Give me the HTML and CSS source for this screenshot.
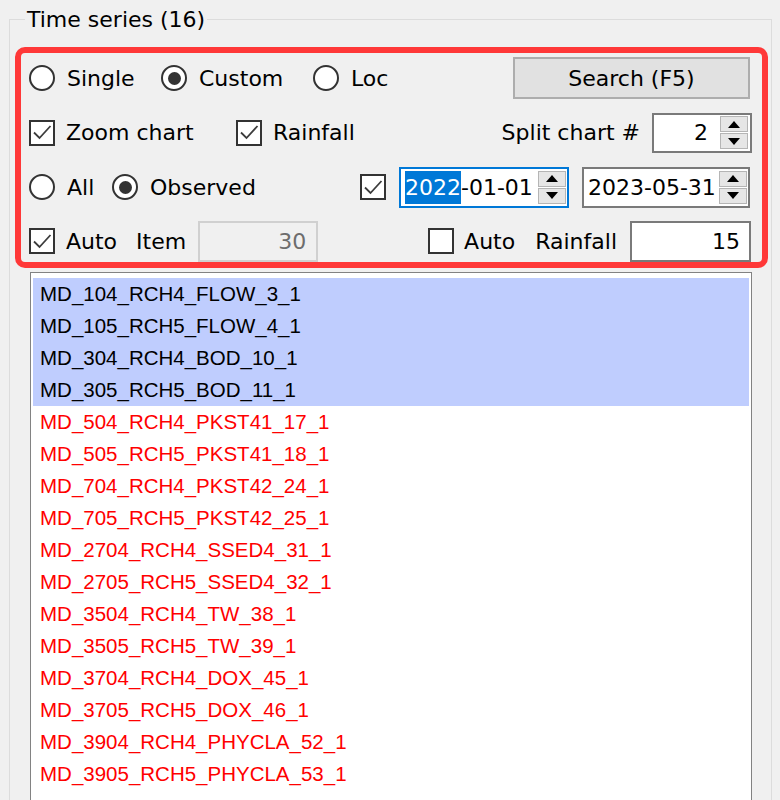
FILE: index.html
```html
<!DOCTYPE html>
<html>
<head>
<meta charset="utf-8">
<link rel="stylesheet" href="styles.css">
</head>
<body>
<div class="group">
  <div class="group-title">Time series (16)</div>
  <div class="panel">
    <div class="row row1">
      <div class="opt w-single"><span class="radio"></span>Single</div>
      <div class="opt w-custom"><span class="radio on"></span>Custom</div>
      <div class="opt"><span class="radio"></span>Loc</div>
      <div class="btn">Search (F5)</div>
    </div>
    <div class="row row2">
      <div class="opt w-zoom"><span class="chk on"><svg viewBox="0 0 25 25" width="25" height="25"><polyline points="4,12.5 9.5,18 20.5,6" fill="none" stroke="#3c3c3c" stroke-width="1.8"/></svg></span>Zoom chart</div>
      <div class="opt"><span class="chk on"><svg viewBox="0 0 25 25" width="25" height="25"><polyline points="4,12.5 9.5,18 20.5,6" fill="none" stroke="#3c3c3c" stroke-width="1.8"/></svg></span>Rainfall</div>
      <div class="split">
        <span>Split chart #</span>
        <div class="spin">
          <div class="spin-val">2</div>
          <div class="spin-btns">
            <div class="sbtn"><svg viewBox="0 0 12 7" width="12" height="7"><polygon points="6,0 12,7 0,7" fill="#000"/></svg></div>
            <div class="sbtn"><svg viewBox="0 0 12 7" width="12" height="7"><polygon points="0,0 12,0 6,7" fill="#000"/></svg></div>
          </div>
        </div>
      </div>
    </div>
    <div class="row row3">
      <div class="opt w-all"><span class="radio"></span>All</div>
      <div class="opt"><span class="radio on"></span>Observed</div>
      <div class="dates">
        <span class="chk on"><svg viewBox="0 0 25 25" width="25" height="25"><polyline points="4,12.5 9.5,18 20.5,6" fill="none" stroke="#3c3c3c" stroke-width="1.8"/></svg></span>
        <div class="date focus">
          <span class="date-val"><span class="hl">2022</span>-01-01</span>
          <div class="spin-btns">
            <div class="sbtn"><svg viewBox="0 0 12 7" width="12" height="7"><polygon points="6,0 12,7 0,7" fill="#000"/></svg></div>
            <div class="sbtn"><svg viewBox="0 0 12 7" width="12" height="7"><polygon points="0,0 12,0 6,7" fill="#000"/></svg></div>
          </div>
        </div>
        <div class="date d2">
          <span class="date-val">2023-05-31</span>
          <div class="spin-btns">
            <div class="sbtn"><svg viewBox="0 0 12 7" width="12" height="7"><polygon points="6,0 12,7 0,7" fill="#000"/></svg></div>
            <div class="sbtn"><svg viewBox="0 0 12 7" width="12" height="7"><polygon points="0,0 12,0 6,7" fill="#000"/></svg></div>
          </div>
        </div>
      </div>
    </div>
    <div class="row row4">
      <div class="opt"><span class="chk on"><svg viewBox="0 0 25 25" width="25" height="25"><polyline points="4,12.5 9.5,18 20.5,6" fill="none" stroke="#3c3c3c" stroke-width="1.8"/></svg></span>Auto</div>
      <span class="lbl-item">Item</span>
      <div class="tb disabled">30</div>
      <div class="rain">
        <div class="opt"><span class="chk"></span>Auto</div>
        <span class="lbl-rain">Rainfall</span>
        <div class="tb tb-rain">15</div>
      </div>
    </div>
  </div>
  <div class="list">
    <div class="item sel">MD_104_RCH4_FLOW_3_1</div>
    <div class="item sel">MD_105_RCH5_FLOW_4_1</div>
    <div class="item sel">MD_304_RCH4_BOD_10_1</div>
    <div class="item sel">MD_305_RCH5_BOD_11_1</div>
    <div class="item">MD_504_RCH4_PKST41_17_1</div>
    <div class="item">MD_505_RCH5_PKST41_18_1</div>
    <div class="item">MD_704_RCH4_PKST42_24_1</div>
    <div class="item">MD_705_RCH5_PKST42_25_1</div>
    <div class="item">MD_2704_RCH4_SSED4_31_1</div>
    <div class="item">MD_2705_RCH5_SSED4_32_1</div>
    <div class="item">MD_3504_RCH4_TW_38_1</div>
    <div class="item">MD_3505_RCH5_TW_39_1</div>
    <div class="item">MD_3704_RCH4_DOX_45_1</div>
    <div class="item">MD_3705_RCH5_DOX_46_1</div>
    <div class="item">MD_3904_RCH4_PHYCLA_52_1</div>
    <div class="item">MD_3905_RCH5_PHYCLA_53_1</div>
  </div>
</div>
</body>
</html>
```
FILE: styles.css
```css
html, body {
  margin: 0;
  padding: 0;
}
body {
  width: 780px;
  height: 800px;
  overflow: hidden;
  box-sizing: border-box;
  padding: 0 8px 0 9px;
  background: #f0f0f0;
  font-family: "DejaVu Sans", sans-serif;
  font-size: 22px;
  color: #000;
}
.group {
  margin-top: 19px;
  border: 1px solid #dcdcdc;
  border-bottom: 0;
  height: 780px;
}
.group-title {
  width: fit-content;
  margin: -12px 0 0 15px;
  padding: 0 2px;
  line-height: 24px;
  background: #f0f0f0;
  color: #000;
}
.panel {
  box-sizing: border-box;
  height: 221px;
  margin: 15px 3px 0 5px;
  border: 6px solid #ff3838;
  border-radius: 10px;
  padding: 0 10px 0 8px;
}
.row {
  display: flex;
  align-items: center;
  height: 54px;
}
.row1 { margin-top: -2px; }
.row2 { height: 55px; }
.opt {
  display: flex;
  align-items: center;
  white-space: nowrap;
}
.w-single { width: 132px; }
.w-custom { width: 152px; }
.w-zoom { width: 207px; }
.w-all { width: 83px; }
.radio {
  box-sizing: border-box;
  width: 26px;
  height: 26px;
  border: 2px solid #333;
  border-radius: 50%;
  background: #fff;
  margin-right: 12px;
  display: flex;
  align-items: center;
  justify-content: center;
  flex: none;
}
.radio.on::after {
  content: "";
  width: 13px;
  height: 13px;
  border-radius: 50%;
  background: #333;
}
.chk {
  box-sizing: border-box;
  width: 26px;
  height: 26px;
  border: 2px solid #333;
  background: #fff;
  margin-right: 11px;
  display: flex;
  align-items: center;
  justify-content: center;
  flex: none;
}
.chk svg { display: block; flex: none; }
.btn {
  box-sizing: border-box;
  margin-left: auto;
  margin-right: 2px;
  width: 237px;
  height: 42px;
  border: 2px solid #adadad;
  background: #e1e1e1;
  display: flex;
  align-items: center;
  justify-content: center;
}
.split {
  margin-left: auto;
  display: flex;
  align-items: center;
  gap: 12px;
  white-space: nowrap;
}
.spin {
  box-sizing: border-box;
  width: 100px;
  height: 40px;
  border: 2px solid #7a7a7a;
  background: #fff;
  display: flex;
  align-items: center;
}
.spin-val {
  flex: 1;
  text-align: right;
  padding-right: 12px;
}
.spin-btns {
  width: 28px;
  display: flex;
  flex-direction: column;
  gap: 1px;
  margin-right: 2px;
  flex: none;
}
.sbtn {
  box-sizing: border-box;
  height: 16px;
  background: #e6e6e6;
  border: 1px solid #b5b5b5;
  display: flex;
  align-items: center;
  justify-content: center;
}
.sbtn svg { display: block; }
.dates {
  margin-left: auto;
  margin-right: 2px;
  display: flex;
  align-items: center;
  gap: 13px;
}
.dates .chk { margin-right: 0; }
.date {
  box-sizing: border-box;
  width: 170px;
  height: 41px;
  border: 2px solid #7a7a7a;
  background: #fff;
  display: flex;
  align-items: center;
  padding-left: 4px;
  white-space: nowrap;
}
.date.d2 { width: 168px; padding-left: 4px; }
.date.focus { border-color: #0078d7; }
.date .spin-btns { margin-left: auto; margin-right: 1px; }
.hl {
  background: #0078d7;
  color: #fff;
  display: inline-block;
  line-height: 33px;
}
.lbl-item {
  margin-left: 19px;
  margin-right: 12px;
}
.tb {
  box-sizing: border-box;
  height: 41px;
  width: 120px;
  border: 2px solid #7a7a7a;
  background: #fff;
  text-align: right;
  padding-right: 9px;
  line-height: 37px;
}
.tb.disabled {
  border-color: #d0d0d0;
  background: #f0f0f0;
  color: #6d6d6d;
  padding-right: 10px;
}
.rain {
  margin-left: auto;
  margin-right: 1px;
  display: flex;
  align-items: center;
  white-space: nowrap;
}
.rain .chk { margin-right: 10px; }
.lbl-rain {
  margin-left: 20px;
  margin-right: 13px;
}
.tb-rain { width: 121px; }
.list {
  box-sizing: border-box;
  margin: 4px 19px 0 20px;
  border: 1px solid #828282;
  border-bottom: 0;
  background: #fff;
  padding: 5px 2px 0 2px;
  height: 528px;
  overflow: hidden;
}
.item {
  height: 32px;
  line-height: 32px;
  padding-left: 7px;
  font-family: "Liberation Sans", Arial, sans-serif;
  font-size: 20.5px;
  color: #ff0000;
  white-space: nowrap;
}
.item.sel {
  background: #bfcdfe;
  color: #000;
}
```
